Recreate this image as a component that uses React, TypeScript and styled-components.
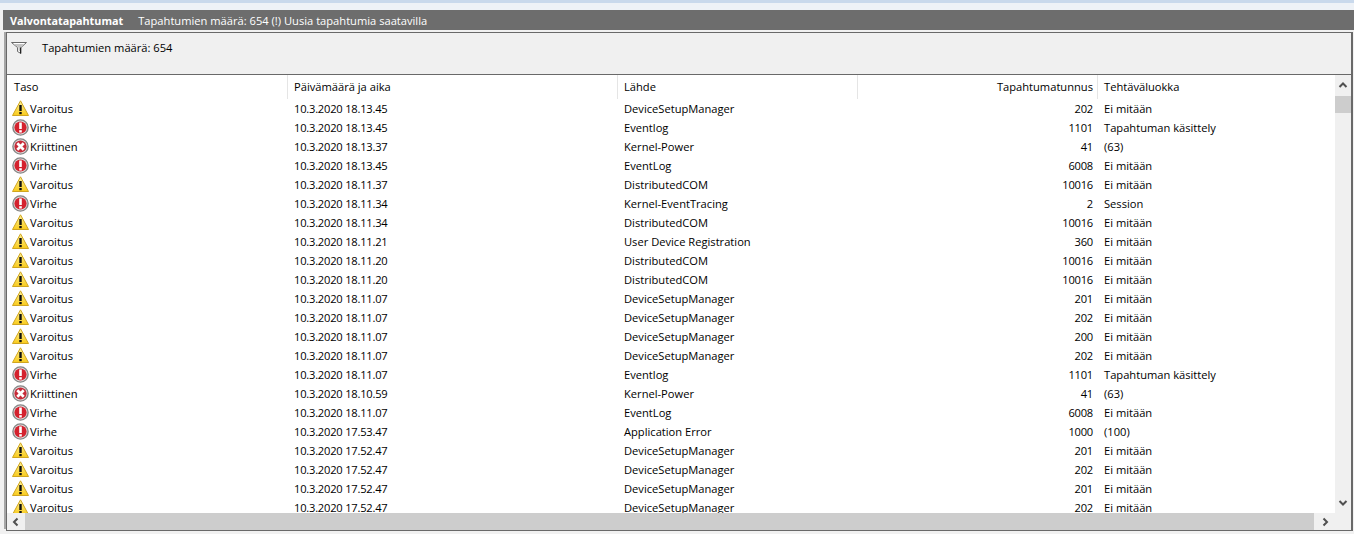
import {createGlobalStyle, styled} from "styled-components";

type Level = 'warning' | 'error' | 'critical'
type LogEvent = { level: Level, time: string, source: string, id: number, task: string }

const levelNames: Record<Level, string> = {warning: 'Varoitus', error: 'Virhe', critical: 'Kriittinen'}

const SETUP = 'DeviceSetupManager'
const COM = 'DistributedCOM'
const NONE = 'Ei mitään'
const HANDLING = 'Tapahtuman käsittely'

const events: LogEvent[] = [
    {level: 'warning', time: '10.3.2020 18.13.45', source: SETUP, id: 202, task: NONE},
    {level: 'error', time: '10.3.2020 18.13.45', source: 'Eventlog', id: 1101, task: HANDLING},
    {level: 'critical', time: '10.3.2020 18.13.37', source: 'Kernel-Power', id: 41, task: '(63)'},
    {level: 'error', time: '10.3.2020 18.13.45', source: 'EventLog', id: 6008, task: NONE},
    {level: 'warning', time: '10.3.2020 18.11.37', source: COM, id: 10016, task: NONE},
    {level: 'error', time: '10.3.2020 18.11.34', source: 'Kernel-EventTracing', id: 2, task: 'Session'},
    {level: 'warning', time: '10.3.2020 18.11.34', source: COM, id: 10016, task: NONE},
    {level: 'warning', time: '10.3.2020 18.11.21', source: 'User Device Registration', id: 360, task: NONE},
    {level: 'warning', time: '10.3.2020 18.11.20', source: COM, id: 10016, task: NONE},
    {level: 'warning', time: '10.3.2020 18.11.20', source: COM, id: 10016, task: NONE},
    {level: 'warning', time: '10.3.2020 18.11.07', source: SETUP, id: 201, task: NONE},
    {level: 'warning', time: '10.3.2020 18.11.07', source: SETUP, id: 202, task: NONE},
    {level: 'warning', time: '10.3.2020 18.11.07', source: SETUP, id: 200, task: NONE},
    {level: 'warning', time: '10.3.2020 18.11.07', source: SETUP, id: 202, task: NONE},
    {level: 'error', time: '10.3.2020 18.11.07', source: 'Eventlog', id: 1101, task: HANDLING},
    {level: 'critical', time: '10.3.2020 18.10.59', source: 'Kernel-Power', id: 41, task: '(63)'},
    {level: 'error', time: '10.3.2020 18.11.07', source: 'EventLog', id: 6008, task: NONE},
    {level: 'error', time: '10.3.2020 17.53.47', source: 'Application Error', id: 1000, task: '(100)'},
    {level: 'warning', time: '10.3.2020 17.52.47', source: SETUP, id: 201, task: NONE},
    {level: 'warning', time: '10.3.2020 17.52.47', source: SETUP, id: 202, task: NONE},
    {level: 'warning', time: '10.3.2020 17.52.47', source: SETUP, id: 201, task: NONE},
    {level: 'warning', time: '10.3.2020 17.52.47', source: SETUP, id: 202, task: NONE},
]

const COLUMNS = '281px 330px 240px 240px 1fr'

const GlobalStyle = createGlobalStyle`
    html, body {
        margin: 0;
        padding: 0;
        background: #f1f1f1;
    }

    body {
        font-family: "Open Sans", "Noto Sans", sans-serif;
        font-size: 11.15px;
        color: #000;
    }
`

const Page = styled.div`
    width: 1354px;
    height: 534px;
    overflow: hidden;
    display: flex;
    flex-direction: column;
`

const TopStrip = styled.div`
    height: 10px;
    flex: none;
    background: linear-gradient(#c9d9ec 0, #c9d9ec 3px, #eef2f7 3px);
`

const TitleBar = styled.div`
    height: 20px;
    flex: none;
    margin-left: 3px;
    padding-left: 7px;
    background: #6d6d6d;
    color: #fff;
    display: flex;
    align-items: center;
    gap: 15px;

    .title {
        font-weight: 700;
        font-size: 10.8px;
    }
`

const Panel = styled.div`
    height: 499px;
    flex: none;
    box-sizing: border-box;
    margin: 2px 1px 0 6px;
    border: solid #696969;
    border-width: 1px 2px 1px 1px;
    box-shadow: -3px -1px 0 -1px #a6a6a6;
    display: flex;
    flex-direction: column;
    background: #f0f0f0;
`

const Toolbar = styled.div`
    height: 42px;
    flex: none;
    box-sizing: border-box;
    padding: 6px 0 0 4px;
    border-bottom: 1px solid #696969;
    display: flex;
    align-items: flex-start;
    gap: 15px;

    svg {
        margin-top: 3px;
    }
`

const ToolbarText = styled.span`
    line-height: 18px;
`

const TableArea = styled.div`
    flex: 1;
    min-height: 0;
    display: grid;
    grid-template-columns: 1fr 16px;
    grid-template-rows: 1fr 17px;
`

const TableBody = styled.div`
    background: #fff;
    overflow: hidden;
    min-height: 0;
`

const Row = styled.div`
    display: grid;
    grid-template-columns: ${COLUMNS};
    height: 19px;
    line-height: 19px;
    white-space: nowrap;
`

const HeaderRow = styled(Row)`
    height: 24px;
    line-height: 24px;
`

const HeaderCell = styled.div<{ $right?: boolean }>`
    padding: 0 ${p => p.$right ? '4px' : '6px'} 0 6px;
    text-align: ${p => p.$right ? 'right' : 'left'};
    border-right: 1px solid #e5e5e5;

    &:first-child {
        padding-left: 7px;
    }

    &:last-child {
        border-right: none;
    }
`

const Cell = styled.div<{ $right?: boolean }>`
    padding: 0 ${p => p.$right ? '5px' : '6px'} 0 6px;
    text-align: ${p => p.$right ? 'right' : 'left'};
    overflow: hidden;
`

const LevelCell = styled(Cell)`
    padding: 0 0 0 5px;
    display: flex;
    align-items: center;
    gap: 1px;
`

const NumberCell = styled(Cell)`
    letter-spacing: -0.22px;
`

const VerticalBar = styled.div`
    display: flex;
    flex-direction: column;
    background: #f0f0f0;
    min-height: 0;
`

const HorizontalBar = styled.div`
    display: flex;
    background: #f0f0f0;
`

const ArrowButton = styled.div<{ $long?: boolean }>`
    flex: none;
    width: ${p => p.$long ? '21px' : '18px'};
    display: flex;
    align-items: center;
    justify-content: center;
`

const VerticalArrow = styled.div`
    flex: none;
    height: 21px;
    display: flex;
    align-items: center;
    justify-content: center;
`

const VerticalThumb = styled.div`
    flex: none;
    height: 17px;
    background: #cdcdcd;
`

const Spacer = styled.div`
    flex: 1;
`

const HorizontalThumb = styled.div`
    flex: 1;
    background: #cdcdcd;
`

const Corner = styled.div`
    background: #f0f0f0;
`

function FunnelIcon() {
    return (
        <svg width="16" height="12" viewBox="0 0 16 12">
            <path d="M.5.5h15L10 5.500V11.500L6.500 9.500v-4z" fill="#fff" stroke="#6a6a6a"/>
            <path d="M2.500 2h11L9.500 5.500v4L7.500 8.500v-3z" fill="#c4c4c4"/>
            <path d="M9.500 5.500v6" stroke="#222"/>
        </svg>
    )
}

function LevelIcon({level}: { level: Level }) {
    if (level === 'warning') {
        return (
            <svg width="17" height="17" viewBox="0 0 17 17">
                <defs>
                    <linearGradient id="warn" x1="0" y1="0" x2="0" y2="1">
                        <stop offset="0" stopColor="#fff39a"/>
                        <stop offset="1" stopColor="#f9cb1c"/>
                    </linearGradient>
                </defs>
                <path d="M8.500 .8 16.500 15.500H.5z" fill="url(#warn)" stroke="#d0a520" strokeLinejoin="round"/>
                <rect x="7.300" y="5" width="2.400" height="6" fill="#111"/>
                <rect x="7.300" y="12" width="2.400" height="2.200" fill="#111"/>
            </svg>
        )
    }
    const fill = level === 'error' ? '#d4222e' : '#c62b38'
    return (
        <svg width="17" height="17" viewBox="0 0 17 17">
            <circle cx="8.500" cy="8.500" r="7.600" fill="#dcdcdc" stroke="#858585" strokeWidth="1.400"/>
            <circle cx="8.500" cy="8.500" r="6.100" fill={fill}/>
            {level === 'error' ? (
                <>
                    <rect x="7.200" y="3.500" width="2.600" height="6.500" fill="#fff"/>
                    <rect x="7.200" y="11.200" width="2.600" height="2.300" fill="#fff"/>
                </>
            ) : (
                <path d="M5.300 5.300l6.400 6.400M11.700 5.300l-6.400 6.400" stroke="#fff" strokeWidth="2.700"/>
            )}
        </svg>
    )
}

function Chevron({direction}: { direction: 'up' | 'down' | 'left' | 'right' }) {
    const points = {
        up: 'M1.500 6 5 2.500 8.500 6',
        down: 'M1.500 3 5 6.500 8.500 3',
        left: 'M6.500 1.500 3 5l3.500 3.500',
        right: 'M3.500 1.500 7 5 3.500 8.500',
    }[direction]
    return (
        <svg width="10" height="10" viewBox="0 0 10 10">
            <path d={points} fill="none" stroke="#505050" strokeWidth="2"/>
        </svg>
    )
}

export default function App() {
    return (
        <Page>
            <GlobalStyle/>
            <TopStrip/>
            <TitleBar>
                <span className={'title'}>Valvontatapahtumat</span>
                <span>Tapahtumien määrä: 654 (!) Uusia tapahtumia saatavilla</span>
            </TitleBar>
            <Panel>
                <Toolbar>
                    <FunnelIcon/>
                    <ToolbarText>Tapahtumien määrä: 654</ToolbarText>
                </Toolbar>
                <TableArea>
                    <TableBody>
                        <HeaderRow>
                            <HeaderCell>Taso</HeaderCell>
                            <HeaderCell>Päivämäärä ja aika</HeaderCell>
                            <HeaderCell>Lähde</HeaderCell>
                            <HeaderCell $right>Tapahtumatunnus</HeaderCell>
                            <HeaderCell>Tehtäväluokka</HeaderCell>
                        </HeaderRow>
                        {events.map((event, index) => (
                            <Row key={index}>
                                <LevelCell>
                                    <LevelIcon level={event.level}/>
                                    {levelNames[event.level]}
                                </LevelCell>
                                <NumberCell>{event.time}</NumberCell>
                                <Cell>{event.source}</Cell>
                                <NumberCell $right>{event.id}</NumberCell>
                                <Cell>{event.task}</Cell>
                            </Row>
                        ))}
                    </TableBody>
                    <VerticalBar>
                        <VerticalArrow><Chevron direction={'up'}/></VerticalArrow>
                        <VerticalThumb/>
                        <Spacer/>
                        <VerticalArrow><Chevron direction={'down'}/></VerticalArrow>
                    </VerticalBar>
                    <HorizontalBar>
                        <ArrowButton><Chevron direction={'left'}/></ArrowButton>
                        <HorizontalThumb/>
                        <ArrowButton $long><Chevron direction={'right'}/></ArrowButton>
                    </HorizontalBar>
                    <Corner/>
                </TableArea>
            </Panel>
        </Page>
    )
}
